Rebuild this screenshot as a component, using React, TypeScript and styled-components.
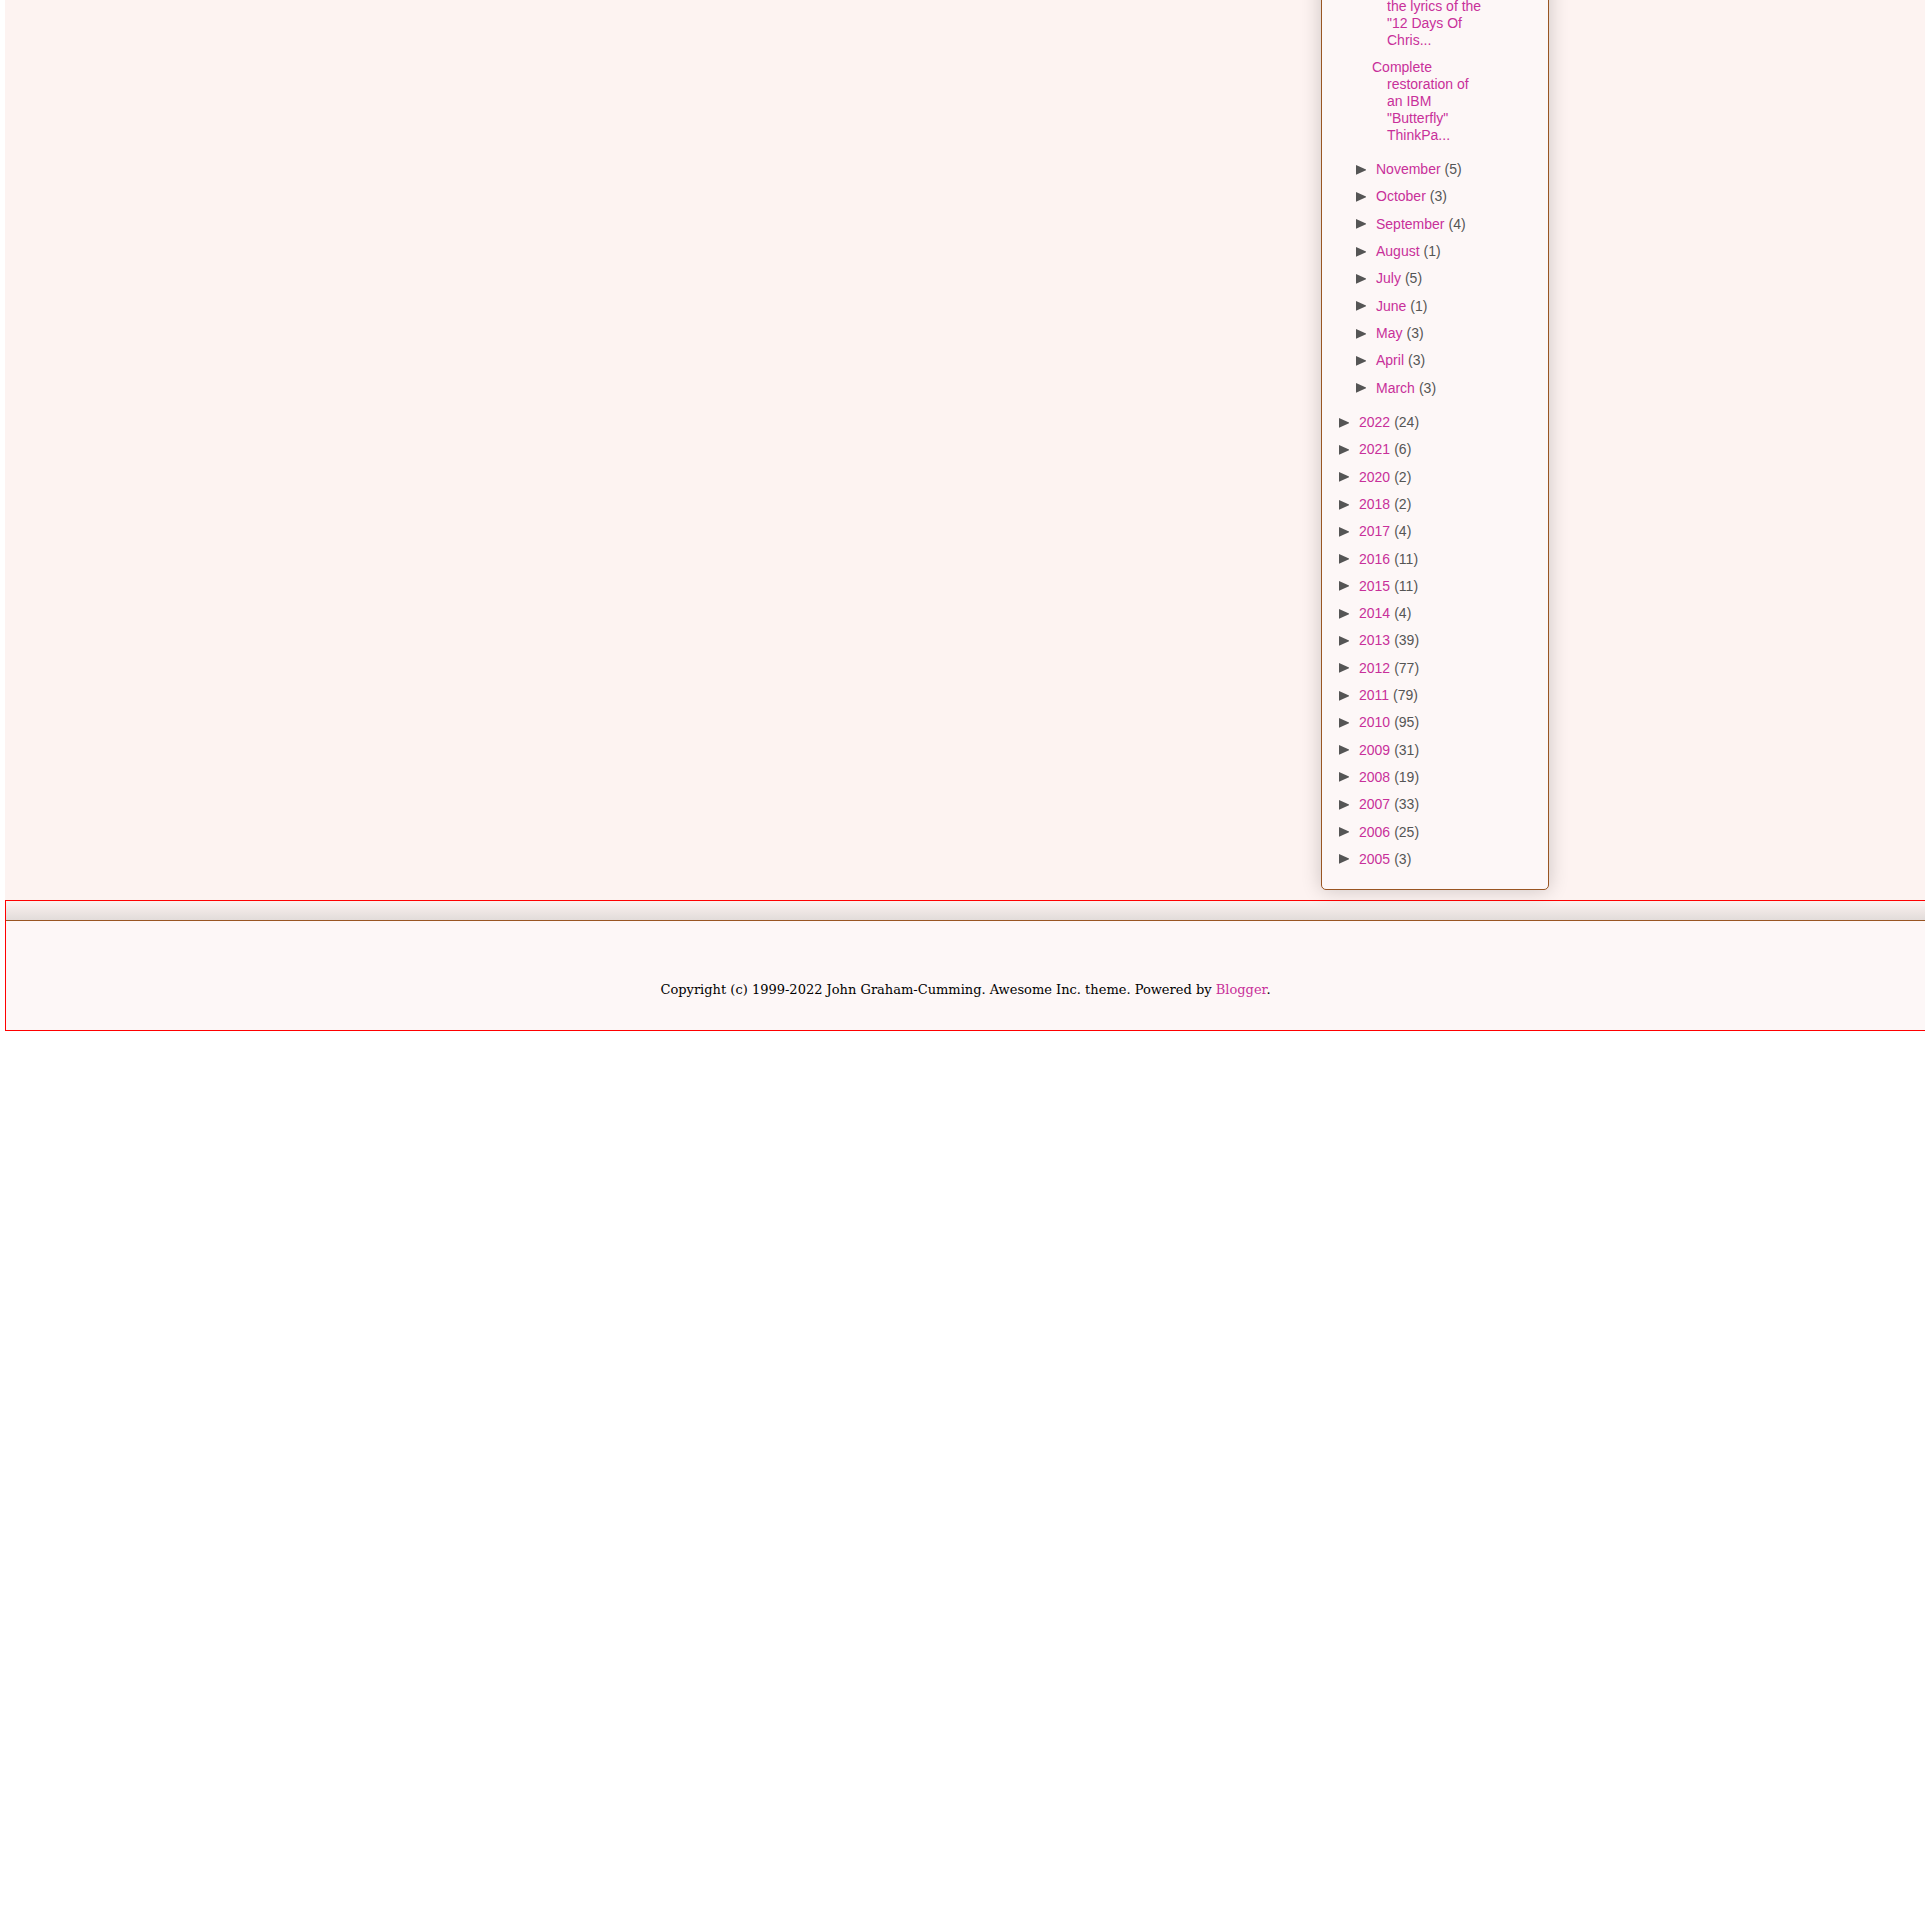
import React from "react";
import styled, { createGlobalStyle } from "styled-components";

const GlobalStyle = createGlobalStyle`
  body {
    margin: 0;
    background: #ffffff;
  }
  ul {
    list-style: none;
    margin: 0;
    padding: 0;
  }
`;

const Page = styled.div`
  margin: 0 5px;
  overflow: hidden;
  background: #fdf3f1;
  color: #555555;
  font: 14px/17px Arial, "Liberation Sans", sans-serif;
`;

const Columns = styled.main`
  display: flex;
  justify-content: flex-end;
  max-width: 1168px;
  margin: 0 auto;
  padding-bottom: 10px;
`;

const Sidebar = styled.aside`
  box-sizing: border-box;
  width: 228px;
  margin-top: -40px;
  padding: 37px 17px 16px;
  background: #fdf7f7;
  border: 1px solid #995522;
  border-radius: 5px;
  box-shadow: 0 0 20px rgba(0, 0, 0, 0.2);
`;

const Archive = styled.nav`
  display: flex;
  flex-direction: column;
  gap: 7px;
`;

const Link = styled.a`
  color: #c8309a;
  text-decoration: none;
  &:hover {
    text-decoration: underline;
  }
`;

const PostList = styled.ul`
  padding: 0 47px 0 33px;
`;

const Post = styled.li<{ $continued?: boolean }>`
  padding: ${(p) => (p.$continued ? "0 0 5px 15px" : "5px 0 5px 15px")};
  text-indent: ${(p) => (p.$continued ? "0" : "-15px")};
`;

const PeriodList = styled.ul<{ $nested?: boolean }>`
  display: grid;
  grid-auto-rows: 1fr;
  min-height: ${(p) => (p.$nested ? "246px" : "464px")};
  padding-left: ${(p) => (p.$nested ? "17px" : "0")};
`;

const Period = styled.li`
  display: flex;
  align-items: center;
`;

const Toggle = styled.button`
  display: flex;
  margin: 0 10px 0 0;
  padding: 0;
  border: 0;
  background: none;
  color: inherit;
  cursor: pointer;
`;

const Count = styled.span`
  margin-left: 4px;
`;

const Footer = styled.footer`
  border: solid #ff0000;
  border-width: 1px 0 1px 1px;
  padding-top: 19px;
  background: linear-gradient(#fcf2f0, #e2dcda 19px);
`;

const FooterInner = styled.div`
  padding: 58px 15px 30px;
  border-top: 1px solid #995522;
  background: #fdf7f7;
  color: #000000;
  font: 13px/21px "Roboto Slab", "DejaVu Serif", serif;
  text-align: center;
`;

type Entry = [label: string, count: number];

const months: Entry[] = [
  ["November", 5],
  ["October", 3],
  ["September", 4],
  ["August", 1],
  ["July", 5],
  ["June", 1],
  ["May", 3],
  ["April", 3],
  ["March", 3],
];

const years: Entry[] = [
  ["2022", 24],
  ["2021", 6],
  ["2020", 2],
  ["2018", 2],
  ["2017", 4],
  ["2016", 11],
  ["2015", 11],
  ["2014", 4],
  ["2013", 39],
  ["2012", 77],
  ["2011", 79],
  ["2010", 95],
  ["2009", 31],
  ["2008", 19],
  ["2007", 33],
  ["2006", 25],
  ["2005", 3],
];

function Periods({ entries, nested }: { entries: Entry[]; nested?: boolean }) {
  return (
    <PeriodList $nested={nested}>
      {entries.map(([label, count]) => (
        <Period key={label}>
          <Toggle type="button" aria-label={`Toggle ${label}`}>
            <svg width="10" height="10" viewBox="0 0 10 10" aria-hidden="true">
              <path d="M0 0L10 4.6V5.2L0 9.8Z" fill="currentColor" />
            </svg>
          </Toggle>
          <Link href="#">{label}</Link>
          <Count>({count})</Count>
        </Period>
      ))}
    </PeriodList>
  );
}

export default function App() {
  return (
    <>
      <GlobalStyle />
      <Page>
        <Columns>
          <Sidebar>
            <Archive>
              <PostList>
                <Post $continued>
                  <Link href="#">the lyrics of the "12 Days Of Chris...</Link>
                </Post>
                <Post>
                  <Link href="#">
                    Complete restoration of an IBM "Butterfly" ThinkPa...
                  </Link>
                </Post>
              </PostList>
              <Periods entries={months} nested />
              <Periods entries={years} />
            </Archive>
          </Sidebar>
        </Columns>
        <Footer>
          <FooterInner>
            Copyright (c) 1999-2022 John Graham-Cumming. Awesome Inc. theme.
            Powered by <Link href="#">Blogger</Link>.
          </FooterInner>
        </Footer>
      </Page>
    </>
  );
}
